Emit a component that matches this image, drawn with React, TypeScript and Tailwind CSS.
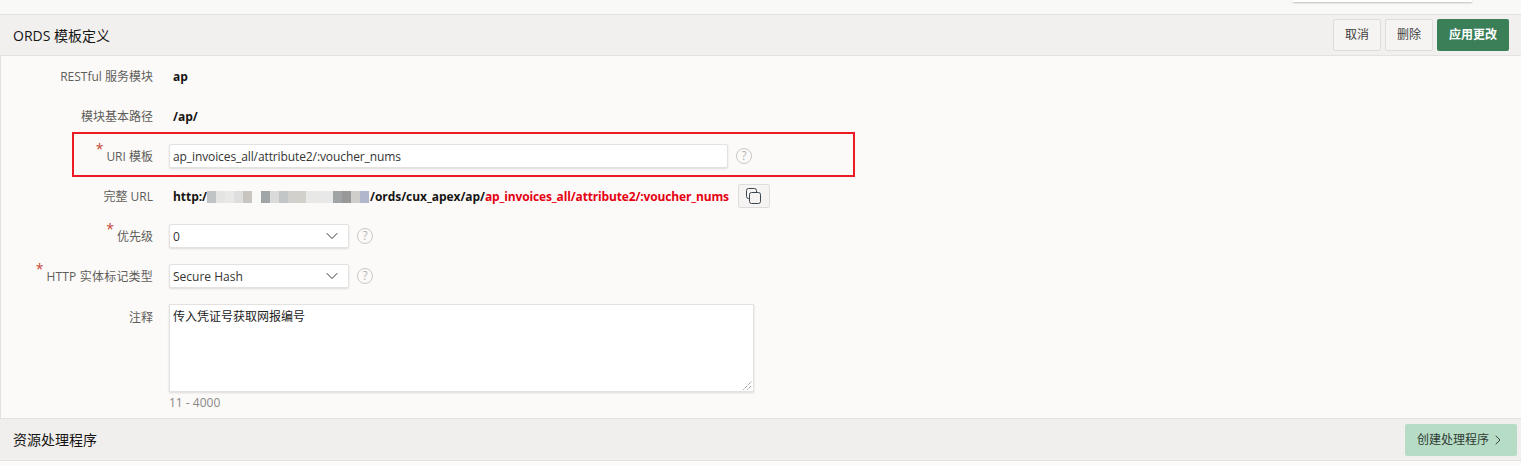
import { ChevronDown, ChevronRight } from "lucide-react";

const font = "font-['Open_Sans','Noto_Sans_CJK_SC',sans-serif]";

// mosaic over the host name in the full URL
const blur = [
  "bg-[#c0c4c4]", "bg-[#e4e4e2]", "bg-[#e8e8e6]", "bg-[#dedede]", "bg-[#c8c4c0]", "bg-[#f8f8f7]",
  "bg-[#a0a5a8]", "bg-[#dadada]", "bg-[#c2c6c6]", "bg-[#d2d0cc]", "bg-[#d2d0ca]", "bg-[#e8e8e6]",
  "bg-[#e8e8e6]", "bg-[#e8e8e8]", "bg-[#a0a4a4]", "bg-[#989898]", "bg-[#d0cecb]", "bg-[#b0b6cc]",
];

function Help() {
  return (
    <span className="ml-2 flex h-4 w-4 shrink-0 items-center justify-center rounded-full border border-[#c9c8c6] text-[12px] leading-none text-[#b5b4b2]">
      ?
    </span>
  );
}

function Row({
  label,
  required,
  labelClass,
  children,
}: {
  label: string;
  required?: boolean;
  labelClass?: string;
  children: React.ReactNode;
}) {
  return (
    <div className="flex h-10 items-center">
      <div className="flex w-[153px] shrink-0 justify-end pt-[1px] text-[12px] text-[#5f5d5a]">
        {required && <span className="mr-[3px] mt-[-6px] text-[14px] leading-none text-[#c74634]">*</span>}
        <span className={labelClass}>{label}</span>
      </div>
      <div className="ml-4 flex min-w-0 flex-1 items-center">{children}</div>
    </div>
  );
}

function SelectBox({ value }: { value: string }) {
  return (
    <>
      <div className="flex h-[24px] w-[180px] items-center justify-between rounded-[2px] border border-[#e3e2e0] bg-white pl-[3px] pr-[6px] text-[12px] text-[#333] shadow-[0_1px_2px_rgba(0,0,0,0.12)]">
        <span className="pt-[1px]">{value}</span>
        <ChevronDown size={20} strokeWidth={1.2} className="text-[#333]" />
      </div>
      <Help />
    </>
  );
}

export default function App() {
  return (
    <div className={`${font} flex h-[466px] w-[1521px] flex-col overflow-hidden bg-[#f9f9f8] text-[#161513]`}>
      <div className="flex h-[14px] shrink-0 items-start justify-end pr-[49px]">
        <div className="h-[2px] w-[179px] bg-white shadow-[0_1px_2px_rgba(0,0,0,0.25)]" />
      </div>

      <div className="flex h-[42px] shrink-0 items-center justify-between border-y border-[#e3e2e0] bg-[#f1f0ef] pl-[13px] pr-3">
        <h2 className="text-[14px] font-normal">ORDS 模板定义</h2>
        <div className="flex items-center gap-1">
          <button className="h-8 w-12 rounded-[2px] border border-[#dedddb] bg-[#f5f4f2] text-[12px] text-[#3f3e3c]">取消</button>
          <button className="h-8 w-12 rounded-[2px] border border-[#dedddb] bg-[#f5f4f2] text-[12px] text-[#3f3e3c]">删除</button>
          <button className="h-8 w-[72px] rounded-[2px] bg-[#3a7f58] text-[12px] font-bold text-white">应用更改</button>
        </div>
      </div>

      <div className="flex h-[362px] shrink-0 flex-col border-l border-[#e3e2e0] bg-[#fbfaf8]">
        <div className="-ml-px">
          <Row label="RESTful 服务模块">
            <span className="pl-1 pt-[1px] text-[12px] font-bold">ap</span>
          </Row>
          <Row label="模块基本路径">
            <span className="pl-1 pt-[1px] text-[12px] font-bold">/ap/</span>
          </Row>
          <div className="relative">
            {/* red annotation drawn over the form */}
            <div className="pointer-events-none absolute left-[72px] top-[-4px] h-[45px] w-[783px] border-2 border-[#ed1c24]" />
            <Row label="URI 模板" required>
              <div className="flex h-[24px] w-[559px] items-center rounded-[2px] border border-[#e3e2e0] bg-white pl-[3px] pt-[1px] text-[12px] tracking-[-0.1px] text-[#333] shadow-[0_1px_2px_rgba(0,0,0,0.12)]">
                ap_invoices_all/attribute2/:voucher_nums
              </div>
              <Help />
            </Row>
          </div>
          <Row label="完整 URL">
            <span className="flex items-center pl-1 pt-[1px] text-[12px] font-bold tracking-[-0.05px]">
              http:/
              <span className="flex h-[12px] w-[163px] items-stretch">
                {blur.map((c, i) => (
                  <span key={i} className={`w-[9px] shrink-0 ${c}`} />
                ))}
              </span>
              /ords/cux_apex/ap/
              <span className="tracking-[-0.15px] text-[#e60012]">ap_invoices_all/attribute2/:voucher_nums</span>
            </span>
            <button className="ml-[9px] flex h-6 w-8 items-center justify-center rounded-[2px] border border-[#dedddb] bg-[#f5f4f2]">
              <svg width="15" height="16" viewBox="0 0 15 16" fill="none" stroke="#3c4650" strokeWidth="1">
                <rect x="3.5" y="4.5" width="11" height="11" rx="2" />
                <path d="M3.5 10.5H2.5a2 2 0 0 1-2-2V2.5a2 2 0 0 1 2-2h6a2 2 0 0 1 2 2v2" />
              </svg>
            </button>
          </Row>
          <Row label="优先级" required>
            <SelectBox value="0" />
          </Row>
          <Row label="HTTP 实体标记类型" required labelClass="tracking-[0.2px]">
            <SelectBox value="Secure Hash" />
          </Row>
          <div className="mt-2 flex items-start">
            <div className="w-[153px] shrink-0 pt-[5px] text-right text-[12px] text-[#5f5d5a]">注释</div>
            <div className="ml-4">
              <div className="relative h-[88px] w-[585px] border border-[#e3e2e0] bg-white px-[3px] py-[3px] text-[12px] text-[#222] shadow-[0_1px_2px_rgba(0,0,0,0.12)]">
                传入凭证号获取网报编号
                <svg className="absolute bottom-[1px] right-[1px]" width="9" height="9" viewBox="0 0 9 9" stroke="#666" strokeWidth="1" strokeDasharray="1 1">
                  <path d="M0.5 8.5 8.5 0.5M4.5 8.5 8.5 4.5" />
                </svg>
              </div>
              <div className="mt-[2px] text-[12px] text-[#8a8886]">11 - 4000</div>
            </div>
          </div>
        </div>
      </div>

      <div className="flex h-[43px] shrink-0 items-center justify-between border-y border-[#e3e2e0] bg-[#f0efee] pl-[13px] pr-1">
        <h2 className="text-[14px] font-normal">资源处理程序</h2>
        <button className="flex h-8 w-28 items-center justify-center gap-[1px] rounded-[2px] bg-[#b6dcc6] pl-[1px] text-[12px] text-[#2f3b34]">
          创建处理程序
          <ChevronRight size={16} strokeWidth={1.4} />
        </button>
      </div>
      <div className="flex-1 bg-[#fbfaf8]" />
    </div>
  );
}
